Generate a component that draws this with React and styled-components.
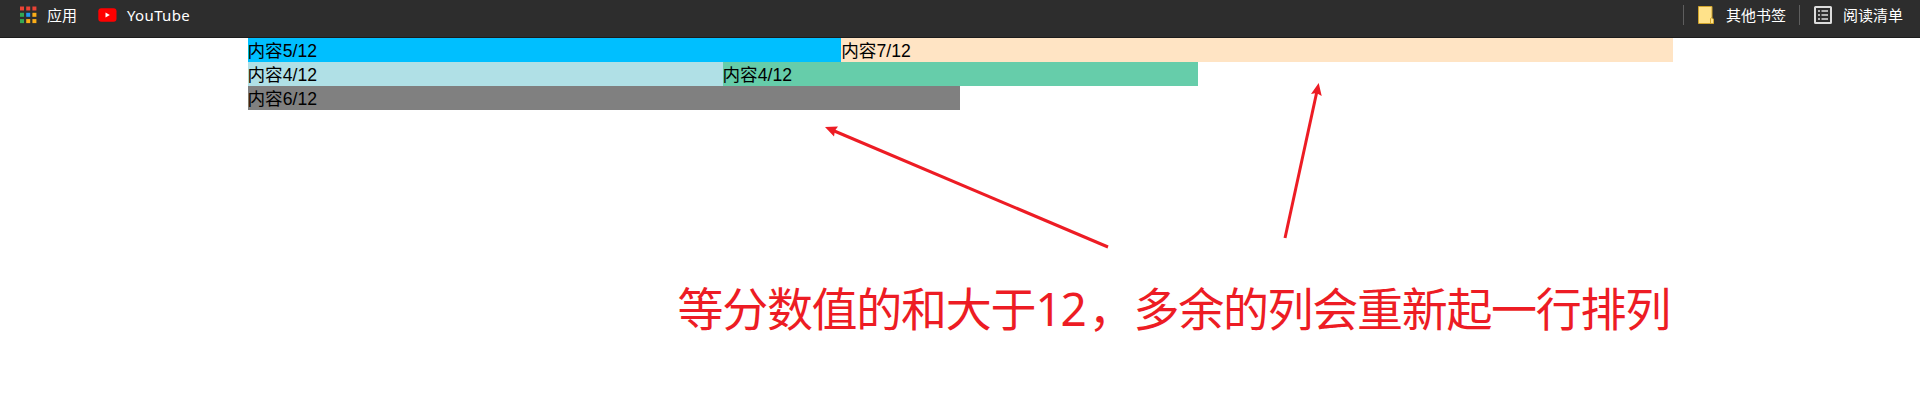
import React from 'react';
import styled, { createGlobalStyle } from 'styled-components';

const GlobalStyle = createGlobalStyle`
  body { margin: 0; background: #fff; overflow: hidden; }
`;

const Page = styled.div`
  position: relative;
  height: 418px;
  overflow: hidden;
`;

const BookmarkBar = styled.nav`
  box-sizing: border-box;
  height: 38px;
  display: flex;
  justify-content: space-between;
  background: #2d2d2d;
  border-bottom: 1px solid #1c1c1c;
  padding: 0 17px 7px 19px;
  font: 15px/30px 'Noto Sans', 'Noto Sans CJK SC', sans-serif;
  color: #fff;
`;

const Group = styled.div`
  display: flex;
  align-items: center;
`;

const Bookmark = styled.span`
  display: flex;
  align-items: center;
  gap: ${(p) => p.$gap}px;
  margin-left: ${(p) => p.$before || 0}px;
  letter-spacing: ${(p) => p.$spacing || 0}px;
  white-space: nowrap;
  svg { display: block; flex: none; }
`;

const Divider = styled.i`
  width: 1px;
  height: 20px;
  margin-left: ${(p) => p.$before || 0}px;
  background: #5e5e5e;
`;

const Container = styled.main`
  width: 1425px;
  margin: 0 auto;
  display: flex;
  flex-wrap: wrap;
  font: 17.6px/26px 'Liberation Sans', 'Noto Sans CJK SC', sans-serif;
  color: #000;
`;

const Column = styled.div`
  flex: 0 0 ${(p) => (p.$span / 12) * 100}%;
  height: 24px;
  background: ${(p) => p.$color};
`;

const Arrows = styled.svg`
  position: absolute;
  left: 0;
  top: 0;
`;

const Note = styled.p`
  margin: 168px 0 0 677.5px;
  display: flex;
  font: 46px/60px 'Noto Sans', 'Noto Sans CJK SC', sans-serif;
  color: #ed1c24;
  white-space: nowrap;
`;

const NotePart = styled.span`
  width: ${(p) => p.$width}px;
  letter-spacing: -1.3px;
`;

const appColors = ['#ea4335', '#ea4335', '#ea4335', '#34a853', '#2196f3', '#fbad18', '#34a853', '#fbad18', '#fbad18'];

const AppsIcon = () => (
  <svg width="18" height="18" viewBox="0 0 18 18">
    {appColors.map((c, i) => (
      <rect key={i} x={1 + (i % 3) * 6.2} y={0.5 + Math.floor(i / 3) * 6.3} width="4" height="4" fill={c} />
    ))}
  </svg>
);

const YouTubeIcon = () => (
  <svg width="19" height="14" viewBox="0 0 19 14">
    <rect x="0.300" y="0.300" width="18.200" height="13.400" rx="3" fill="#f00" />
    <path d="M7.500 4.500v5l4.300-2.500z" fill="#fff" />
  </svg>
);

const FolderIcon = () => (
  <svg width="16" height="18" viewBox="0 0 16 18">
    <path d="M.5.5h13.500v11.500l1.500 1v4.500H.5z" fill="#ffe28a" stroke="#d0a42c" />
    <path d="M12.500 17v-4.500l1.500-1" fill="none" stroke="#d0a42c" />
  </svg>
);

const ListIcon = () => (
  <svg width="18" height="18" viewBox="0 0 18 18">
    <rect x="1" y="1" width="16" height="16" rx="0.500" fill="none" stroke="#dcdcdc" strokeWidth="2" />
    <path d="M4 5h2M4 9h2M4 13h2M7.500 5H14M7.500 9H14M7.500 13H14" stroke="#dcdcdc" strokeWidth="1.500" />
  </svg>
);

const columns = [
  { span: 5, color: '#00bfff' },
  { span: 7, color: '#ffe4c4' },
  { span: 4, color: '#b0e0e6' },
  { span: 4, color: '#66cdaa' },
  { span: 6, color: '#808080' },
];

export default function App() {
  return (
    <Page>
      <GlobalStyle />
      <BookmarkBar>
        <Group>
          <Bookmark $gap={10}><AppsIcon />应用</Bookmark>
          <Bookmark $gap={10} $before={21} $spacing={0.35}><YouTubeIcon />YouTube</Bookmark>
        </Group>
        <Group>
          <Divider />
          <Bookmark $gap={12} $before={14}><FolderIcon />其他书签</Bookmark>
          <Divider $before={13} />
          <Bookmark $gap={11} $before={14}><ListIcon />阅读清单</Bookmark>
        </Group>
      </BookmarkBar>
      <Container>
        {columns.map((c, i) => (
          <Column key={i} $span={c.span} $color={c.color}>内容{c.span}/12</Column>
        ))}
      </Container>
      <Note>
        <NotePart $width={358}>等分数值的和大于</NotePart>
        <NotePart $width={53}>12</NotePart>
        <NotePart $width={45}>，</NotePart>
        <NotePart $width={538}>多余的列会重新起一行排列</NotePart>
      </Note>
      <Arrows width="1920" height="418" fill="#ed1c24" stroke="none">
        <path d="M1108 247L832 130" stroke="#ed1c24" strokeWidth="3" />
        <path d="M825 127L838 126.500L835 130.500L834 136.500z" />
        <path d="M1285 238L1317 91" stroke="#ed1c24" strokeWidth="3" />
        <path d="M1318.700 83L1321.700 96L1316.500 93L1311 94z" />
      </Arrows>
    </Page>
  );
}
